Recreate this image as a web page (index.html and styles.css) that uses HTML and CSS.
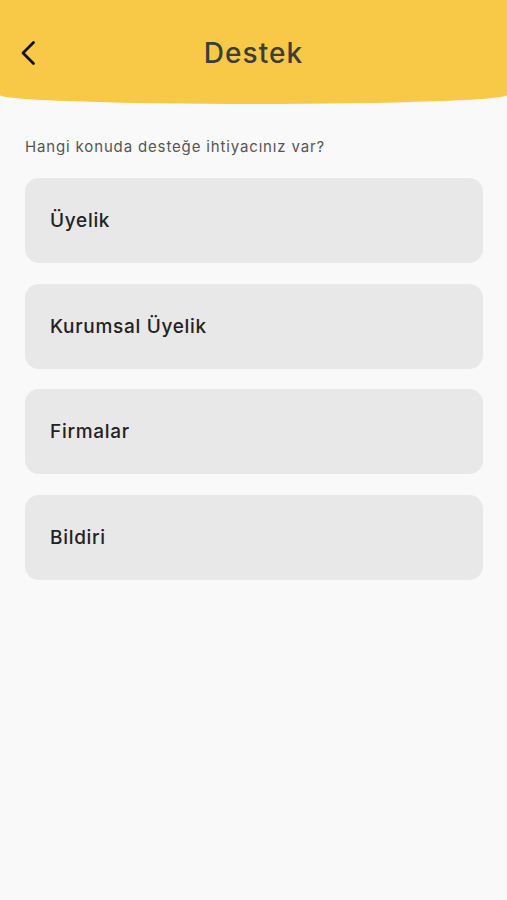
FILE: index.html
```html
<!DOCTYPE html>
<html lang="tr">
<head>
  <meta charset="UTF-8" />
  <meta name="viewport" content="width=device-width, initial-scale=1.0" />
  <title>Destek</title>
  <link rel="stylesheet" href="styles.css">
</head>
<body>
  <header class="topbar">
    <button class="back-btn" aria-label="Geri">
      <svg width="18" height="26" viewBox="0 0 18 26">
        <path d="M14.5 2.5 L4 13 L14.5 23.5" fill="none" stroke="#111" stroke-width="2.8" stroke-linecap="round" stroke-linejoin="round"/>
      </svg>
    </button>
    <h1 class="title">Destek</h1>
  </header>

  <main class="content">
    <p class="question">Hangi konuda desteğe ihtiyacınız var?</p>
    <ul class="topics">
      <li class="topic">Üyelik</li>
      <li class="topic">Kurumsal Üyelik</li>
      <li class="topic">Firmalar</li>
      <li class="topic">Bildiri</li>
    </ul>
  </main>
</body>
</html>
```

FILE: styles.css
```css
body {
  margin: 0;
  background: #f9f9f9;
  font-family: Inter, "Noto Sans", sans-serif;
  color: #222;
}
.topbar {
  position: relative;
  height: 104px;
  background: #f8c946;
  border-radius: 0 0 50% 50% / 0 0 9px 9px;
  display: flex;
  align-items: flex-start;
  justify-content: center;
  padding-top: 36px;
  box-sizing: border-box;
}
.back-btn {
  position: absolute;
  left: 19px;
  top: 40px;
  background: none;
  border: 0;
  padding: 0;
  cursor: pointer;
}
.title {
  margin: 0;
  font-size: 28px;
  font-weight: 500;
  color: #3d3d3d;
  letter-spacing: 1.1px;
}
.content {
  padding: 0 24px 0 25px;
}
.question {
  margin: 33px 0 22px;
  font-size: 15px;
  letter-spacing: 0.85px;
  color: #555;
}
.topics {
  list-style: none;
  margin: 0;
  padding: 0;
  display: flex;
  flex-direction: column;
  gap: 20.6px;
}
.topic {
  height: 85px;
  display: flex;
  align-items: center;
  padding-left: 25px;
  background: #e8e8e8;
  border-radius: 14px;
  font-size: 19px;
  font-weight: 500;
  letter-spacing: 0.7px;
  color: #222;
}
```
